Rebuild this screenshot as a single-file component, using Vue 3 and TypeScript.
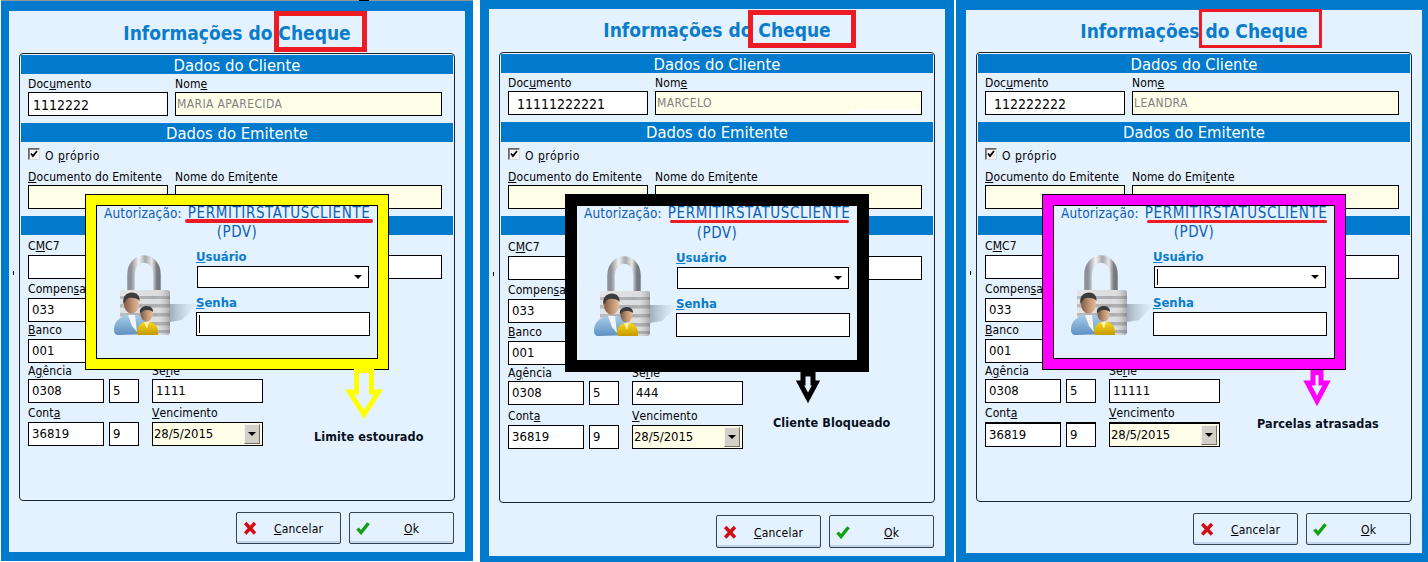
<script setup lang="ts">
interface Panel {
  id: string
  doc: string
  nome: string
  serie: string
  note: string
  arrowBox: string
  arrowPoints: string
}

const panels: Panel[] = [
  {
    id: 'p1',
    doc: '1112222',
    nome: 'MARIA APARECIDA',
    serie: '1111',
    note: 'Limite estourado',
    arrowBox: '0 0 38 54',
    arrowPoints: '11.5,3.5 26.5,3.5 26.5,25 33.5,25 19,47.4 4.5,25 11.5,25'
  },
  {
    id: 'p2',
    doc: '11111222221',
    nome: 'MARCELO',
    serie: '444',
    note: 'Cliente Bloqueado',
    arrowBox: '0 0 26 36',
    arrowPoints: '8,4 18,4 18,13 21,13 13,28 5,13 8,13'
  },
  {
    id: 'p3',
    doc: '112222222',
    nome: 'LEANDRA',
    serie: '11111',
    note: 'Parcelas atrasadas',
    arrowBox: '0 0 34 40',
    arrowPoints: '13,4.5 21,4.5 21,15 26.5,15 17,33 7.5,15 13,15'
  }
]
</script>

<template>
  <div class="sheets">
    <svg class="defs" width="0" height="0" aria-hidden="true">
      <defs>
        <linearGradient id="shackle" x1="0" y1="0" x2="1" y2="0">
          <stop offset="0" stop-color="#8d9196" />
          <stop offset="0.3" stop-color="#f2f3f4" />
          <stop offset="0.55" stop-color="#a5a8ac" />
          <stop offset="0.8" stop-color="#e6e7e8" />
          <stop offset="1" stop-color="#75797e" />
        </linearGradient>
        <linearGradient id="lockside" x1="0" y1="0" x2="1" y2="0">
          <stop offset="0" stop-color="#ffffff" stop-opacity="0.2" />
          <stop offset="0.7" stop-color="#ffffff" stop-opacity="0" />
          <stop offset="1" stop-color="#5d6268" stop-opacity="0.45" />
        </linearGradient>
        <linearGradient id="shadow" x1="0" y1="0" x2="1" y2="0">
          <stop offset="0" stop-color="#8491a0" stop-opacity="0.7" />
          <stop offset="1" stop-color="#b9c8d8" stop-opacity="0" />
        </linearGradient>
        <linearGradient id="skin" x1="0" y1="0" x2="1" y2="0">
          <stop offset="0" stop-color="#7c5a45" />
          <stop offset="0.6" stop-color="#c79a78" />
          <stop offset="1" stop-color="#e0bd9c" />
        </linearGradient>
        <linearGradient id="shirt" x1="0" y1="0" x2="0" y2="1">
          <stop offset="0" stop-color="#a9cdea" />
          <stop offset="1" stop-color="#5d90c2" />
        </linearGradient>
        <linearGradient id="kid" x1="0" y1="0" x2="0" y2="1">
          <stop offset="0" stop-color="#f7d71c" />
          <stop offset="1" stop-color="#c49a00" />
        </linearGradient>
      </defs>
    </svg>

    <section v-for="p in panels" :key="p.id" class="sheet" :class="p.id">
      <div class="inner">
        <h1 class="title">Informações do Cheque</h1>

        <div class="group">
          <div class="band">Dados do Cliente</div>
          <div class="row row-a">
            <div class="field w-doc">
              <label>Doc<u>u</u>mento</label>
              <div class="box doc">{{ p.doc }}</div>
            </div>
            <div class="field grow">
              <label>Nom<u>e</u></label>
              <div class="box ro name">{{ p.nome }}</div>
            </div>
          </div>

          <div class="band band-b">Dados do Emitente</div>
          <div class="check">
            <span class="tick-box">
              <svg viewBox="0 0 8 8" width="8" height="8"><path d="M1 3.5 3 6 7 1" fill="none" stroke="#000" stroke-width="1.8" /></svg>
            </span>
            <span class="check-text">O <u>p</u>róprio</span>
          </div>
          <div class="row row-b">
            <div class="field w-doc">
              <label><u>D</u>ocumento do Emitente</label>
              <div class="box ro"></div>
            </div>
            <div class="field grow">
              <label>Nome do Emi<u>t</u>ente</label>
              <div class="box ro"></div>
            </div>
          </div>

          <div class="band band-c"></div>
          <div class="row row-c">
            <div class="field grow">
              <label>C<u>M</u>C7</label>
              <div class="box"></div>
            </div>
          </div>
          <div class="row row-d">
            <div class="field w-doc">
              <label>Compen<u>s</u>ação</label>
              <div class="box">033</div>
            </div>
          </div>
          <div class="row row-e">
            <div class="field w-doc">
              <label><u>B</u>anco</label>
              <div class="box">001</div>
            </div>
          </div>
          <div class="row row-f">
            <div class="field w-ag">
              <label>A<u>g</u>ência</label>
              <div class="box">0308</div>
            </div>
            <div class="field w-dv">
              <label>&nbsp;</label>
              <div class="box">5</div>
            </div>
            <div class="field w-serie">
              <label>Sé<u>r</u>ie</label>
              <div class="box">{{ p.serie }}</div>
            </div>
          </div>
          <div class="row row-g">
            <div class="field w-ag">
              <label>Cont<u>a</u></label>
              <div class="box">36819</div>
            </div>
            <div class="field w-dv">
              <label>&nbsp;</label>
              <div class="box">9</div>
            </div>
            <div class="field w-serie">
              <label><u>V</u>encimento</label>
              <div class="box ro date">
                <span>28/5/2015</span>
                <span class="date-btn"><i class="caret"></i></span>
              </div>
            </div>
          </div>
        </div>

        <div class="footer">
          <button class="btn" type="button">
            <svg class="btn-icon" viewBox="0 0 14 14" width="14" height="14">
              <path d="M2.200 2 12 12.500M12 2 2.200 12.500" fill="none" stroke="#d40b12" stroke-width="3.400" />
            </svg>
            <span class="btn-text"><u>C</u>ancelar</span>
          </button>
          <button class="btn" type="button">
            <svg class="btn-icon" viewBox="0 0 14 14" width="14" height="14">
              <path d="M1.500 7.500 5 11.500 12.500 2.200" fill="none" stroke="#12a012" stroke-width="3.400" />
            </svg>
            <span class="btn-text"><u>O</u>k</span>
          </button>
        </div>
      </div>

      <span class="mark"></span>
      <span v-if="p.id === 'p2'" class="patch"></span>
      <span v-if="p.id === 'p1'" class="topbit"></span>
      <span class="redbox"></span>

      <div class="auth">
        <div class="auth-line">Autorização: <span class="perm">PERMITIRSTATUSCLIENTE</span></div>
        <div class="auth-pdv">(PDV)</div>
        <span class="redline"></span>
        <div class="auth-body">
          <svg class="lock" viewBox="0 0 90 84" width="90" height="84" aria-hidden="true">
            <path d="M60 50 L88 50 L72 66 L60 68z" fill="url(#shadow)" />
            <path d="M21 42 V20 A13 15 0 0 1 47 20 V42" fill="none" stroke="url(#shackle)" stroke-width="7.500" />
            <rect x="10" y="36" width="50" height="45" rx="3" fill="#dcddde" />
            <g fill="#a9abae">
              <rect x="10" y="42" width="50" height="3" />
              <rect x="10" y="50" width="50" height="3.500" />
              <rect x="10" y="59" width="50" height="3.500" />
              <rect x="10" y="68" width="50" height="3.500" />
              <rect x="10" y="76" width="50" height="3" />
            </g>
            <rect x="10" y="36" width="50" height="45" rx="3" fill="url(#lockside)" />
            <path d="M4 75 C4 67 11 63 16 61 L27 61 C33 63 37 67 38 72 L38 80 L9 81 C5 81 4 79 4 75z" fill="url(#shirt)" />
            <path d="M18 61 L25 61 L27 78 L22 72z" fill="#f2f5f8" />
            <ellipse cx="21.500" cy="50" rx="7.500" ry="9.500" fill="url(#skin)" />
            <path d="M13.500 50 C12 42 17 38.500 22 38.500 C27 38.500 30 42 29.500 47 C27 43 19 43 17 45 C15.500 46 15 49 13.500 50z" fill="#3c3c3c" />
            <path d="M27 78 C27 72 31 69 34 68 L40 68 C45 69 48 73 48 78 L48 81 L28 81z" fill="url(#kid)" />
            <path d="M34 68 L39 68 L37 75z" fill="#fff3b0" />
            <ellipse cx="36.500" cy="60" rx="6" ry="7.500" fill="url(#skin)" />
            <path d="M30 59 C29 54 33 52 37 52 C41 52 43.500 55 43 58 C40 55.500 35 55.500 33 57 C32 58 31 59 30 59z" fill="#3c3c3c" />
          </svg>
          <div class="auth-form">
            <label class="auth-label"><u>U</u>suário</label>
            <div class="select">
              <span v-if="p.id === 'p3'" class="cursor"></span>
              <i class="caret"></i>
            </div>
            <label class="auth-label second"><u>S</u>enha</label>
            <div class="pass">
              <span v-if="p.id === 'p1'" class="cursor"></span>
            </div>
          </div>
        </div>
      </div>

      <svg class="arrow" :viewBox="p.arrowBox" aria-hidden="true">
        <polygon :points="p.arrowPoints" />
      </svg>
      <div class="note">{{ p.note }}</div>
    </section>
  </div>
</template>

<style>
html,
body {
  margin: 0;
  background: #ffffff;
}
</style>

<style scoped>
.defs {
  position: absolute;
}
.sheets {
  display: flex;
  width: 1428px;
  height: 562px;
  overflow: hidden;
  padding-left: 1px;
  box-sizing: border-box;
  align-items: flex-start;
  font-family: 'DejaVu Sans', sans-serif;
  font-stretch: condensed;
  font-size: 12px;
  color: #000;
}
.sheet {
  position: relative;
  flex: none;
  box-sizing: border-box;
  background: #007acc;
  display: flex;
  --val-pad: 8px;
  --h-title: 42px;
  --pt-title: 9px;
  --band-b: 20px;
  --lc: 20px;
  --ld: 19px;
  --le: 17px;
  --lf: 16px;
  --lg: 19px;
  --gh: 24px;
  --gtop: 1px;
  --foot: 51px;
  --foot-pt: 11px;
  --btn: 32px;
}
.p1 {
  width: 472px;
  height: 561px;
  padding: 10px 8px 9px;
  margin-right: 7px;
  border-top: 1px solid #8f979e;
  --val-pad: 4px;
  --pt-title: 10px;
  --band-b: 19px;
}
.p2 {
  width: 474px;
  height: 562px;
  padding: 9px 9px 6px;
  margin-right: 2px;
  --h-title: 43px;
  --lc: 21px;
  --le: 18px;
  --lg: 20px;
  --foot: 53px;
  --foot-pt: 12px;
  --btn: 33px;
}
.p3 {
  width: 472px;
  height: 562px;
  padding: 10px 6px 9px 10px;
  --gh: 25px;
  --gtop: 2px;
}
.inner {
  flex: 1;
  min-width: 0;
  background: #e4f1fe;
  display: flex;
  flex-direction: column;
}
.title {
  margin: 0;
  height: var(--h-title);
  padding-top: var(--pt-title);
  box-sizing: border-box;
  text-align: center;
  font-size: 19px;
  line-height: 24px;
  font-weight: 700;
  color: #0a7ccb;
}
.group {
  flex: 1;
  margin: 0 10px;
  border: 1px solid #1d2630;
  border-radius: 4px;
  padding: 1px 1px 0;
  min-height: 0;
}
.band {
  height: 19px;
  line-height: 21px;
  background: #007acc;
  color: #fff;
  text-align: center;
  font-size: 16.500px;
}
.band-b {
  margin-top: 7px;
  height: var(--band-b);
}
.band-c {
  margin-top: 7px;
}
.row {
  display: flex;
  padding: 0 11px 0 7px;
  gap: 7px;
}
.field {
  display: flex;
  flex-direction: column;
  flex: none;
}
.field label {
  display: flex;
  align-items: flex-end;
  white-space: nowrap;
  line-height: 15px;
  height: var(--lab);
  padding-bottom: var(--lab-pb, 0);
  box-sizing: border-box;
  letter-spacing: 0.1px;
}
.grow {
  flex: 1;
}
.w-doc {
  width: 140px;
}
.w-ag {
  width: 76px;
}
.w-dv {
  width: 30px;
}
.w-serie {
  width: 111px;
  margin-left: 8px;
}
.row-a {
  --lab: 18px;
}
.row-b {
  --lab: 25px;
}
.row-c {
  --lab: var(--lc);
  --lab-pb: 1px;
}
.row-d {
  --lab: var(--ld);
  --lab-pb: 1px;
}
.row-e {
  --lab: var(--le);
  --lab-pb: 1px;
}
.row-f {
  --lab: var(--lf);
  gap: 5px;
}
.row-g {
  --lab: var(--lg);
  --lab-pb: 1px;
  gap: 5px;
}
.box {
  height: 24px;
  box-sizing: border-box;
  border: 1px solid #000;
  background: #fff;
  font-size: 13px;
  line-height: 20px;
  padding: 0 3px;
  display: flex;
  align-items: center;
}
.row-g .box {
  height: var(--gh);
  border-top-width: var(--gtop);
}
.ro {
  background: #fefee8;
}
.doc {
  font-size: 14px;
  padding: 2px 0 0 var(--val-pad);
}
.name {
  color: #808080;
  font-size: 12px;
  letter-spacing: 0.4px;
  padding: 0 0 0 1px;
}
.date {
  padding: 0 2px 1px 1px;
  justify-content: space-between;
  letter-spacing: -0.1px;
}
.date-btn {
  width: 16px;
  height: 20px;
  box-sizing: border-box;
  background: #d4d0c8;
  border: 1px solid;
  border-color: #f4f2ee #6f6d68 #6f6d68 #f4f2ee;
  display: flex;
  align-items: center;
  justify-content: center;
}
.caret {
  display: block;
  width: 0;
  height: 0;
  border: 4px solid transparent;
  border-top-color: #000;
  border-bottom-width: 0;
}
.check {
  margin-top: 6px;
  padding-left: 7px;
  height: 12px;
  display: flex;
  align-items: center;
  gap: 5px;
  line-height: 14px;
}
.check-text {
  padding-top: 4px;
  letter-spacing: 0.5px;
}
.tick-box {
  width: 12px;
  height: 12px;
  box-sizing: border-box;
  background: #f4f4f4;
  border: 1px solid;
  border-color: #666 #ddd #ddd #666;
  box-shadow: inset 1px 1px 0 #8a8a8a;
  display: flex;
  align-items: center;
  justify-content: center;
}
.footer {
  height: var(--foot);
  padding: var(--foot-pt) 11px 0 0;
  box-sizing: border-box;
  display: flex;
  justify-content: flex-end;
  gap: 8px;
  flex: none;
}
.btn {
  width: 105px;
  height: var(--btn);
  box-sizing: border-box;
  padding: 0 0 0 6px;
  margin: 0;
  display: flex;
  align-items: center;
  background: #e4f1fe;
  border: 1px solid #36424f;
  border-radius: 2px;
  box-shadow: inset 0 -2px 0 #c2d4ee;
  font: inherit;
  color: #000;
}
.btn-icon {
  flex: none;
}
.btn-text {
  flex: 1;
  text-align: center;
  padding-top: 2px;
  letter-spacing: 0.2px;
}
.mark {
  position: absolute;
  width: 1px;
  height: 4px;
  background: #000;
  left: 12px;
  top: 270px;
}
.p2 .mark {
  left: 13px;
  top: 272px;
}
.p3 .mark {
  left: 14px;
  top: 271px;
}
.patch {
  position: absolute;
  left: 370px;
  top: 109px;
  width: 67px;
  height: 5px;
  background: #fff;
}
.topbit {
  position: absolute;
  left: 358px;
  top: -1px;
  width: 10px;
  height: 1px;
  background: #000;
}
.redbox {
  position: absolute;
  box-sizing: border-box;
  border: 5px solid #ed1c24;
}
.p1 .redbox {
  left: 273px;
  top: 10px;
  width: 93px;
  height: 41px;
}
.p2 .redbox {
  left: 268px;
  top: 10px;
  width: 108px;
  height: 38px;
}
.p3 .redbox {
  left: 243px;
  top: 9px;
  width: 123px;
  height: 39px;
  border-width: 3px;
}
.auth {
  position: absolute;
  box-sizing: border-box;
  background: #e4f1fe;
  width: 304px;
  height: 176px;
  top: 194px;
  padding: 12px;
  color: #0a5fb5;
  --pdv-mt: 3px;
}
.p1 .auth {
  left: 84px;
  top: 193px;
  box-shadow: inset 0 0 0 1px #000, inset 0 0 0 11px #ffff00, inset 0 0 0 12px #000;
}
.p2 .auth {
  left: 85px;
  height: 178px;
  box-shadow: inset 0 0 0 12px #000;
  --pdv-mt: 4px;
}
.p3 .auth {
  left: 86px;
  box-shadow: inset 0 0 0 1px #000, inset 0 0 0 11px #ff00ff, inset 0 0 0 12px #000;
}
.auth-line {
  margin-top: -1px;
  padding-left: 7px;
  line-height: 16px;
  white-space: nowrap;
  font-size: 13.500px;
  letter-spacing: 0.15px;
}
.perm {
  margin-left: 2px;
  font-size: 15px;
  letter-spacing: 0.6px;
}
.auth-pdv {
  margin-top: var(--pdv-mt);
  line-height: 16px;
  text-align: center;
  font-size: 15px;
  letter-spacing: 0.5px;
}
.redline {
  position: absolute;
  background: #ed1c24;
  border-radius: 2px;
  height: 4px;
  left: 100px;
  top: 25px;
  width: 188px;
}
.p2 .redline {
  left: 105px;
  top: 26px;
  width: 179px;
  height: 3px;
}
.p3 .redline {
  left: 105px;
  top: 26px;
  width: 180px;
  height: 3px;
}
.auth-body {
  margin-top: 9px;
  display: flex;
  align-items: flex-start;
}
.lock {
  flex: none;
  margin: 5px 0 0 13px;
}
.auth-form {
  margin-left: -4px;
  width: 174px;
  display: flex;
  flex-direction: column;
}
.auth-label {
  height: 17px;
  line-height: 16px;
  font-size: 13px;
  font-weight: 700;
  color: #0a7ccb;
}
.auth-label.second {
  margin-top: 7px;
}
.select {
  position: relative;
  margin: 0 1px;
  height: 22px;
  box-sizing: border-box;
  border: 1px solid #000;
  background: #fff;
  display: flex;
  align-items: center;
  justify-content: flex-end;
  padding-right: 6px;
}
.pass {
  position: relative;
  height: 24px;
  box-sizing: border-box;
  border: 1px solid #000;
  background: #fff;
}
.cursor {
  position: absolute;
  left: 2px;
  top: 2px;
  bottom: 2px;
  width: 1px;
  background: #000;
}
.arrow {
  position: absolute;
  fill: none;
}
.p1 .arrow {
  left: 344px;
  top: 366px;
  width: 38px;
  height: 54px;
  stroke: #ffff00;
  stroke-width: 5;
}
.p2 .arrow {
  left: 315px;
  top: 370px;
  width: 26px;
  height: 36px;
  stroke: #000;
  stroke-width: 5;
}
.p3 .arrow {
  left: 344px;
  top: 368px;
  width: 34px;
  height: 40px;
  stroke: #ff00ff;
  stroke-width: 5;
}
.note {
  position: absolute;
  font-weight: 700;
  font-size: 12.500px;
  letter-spacing: 0.1px;
  line-height: 16px;
  white-space: nowrap;
  color: #06101c;
}
.p1 .note {
  left: 313px;
  top: 428px;
}
.p2 .note {
  left: 293px;
  top: 415px;
}
.p3 .note {
  left: 301px;
  top: 416px;
}
</style>
